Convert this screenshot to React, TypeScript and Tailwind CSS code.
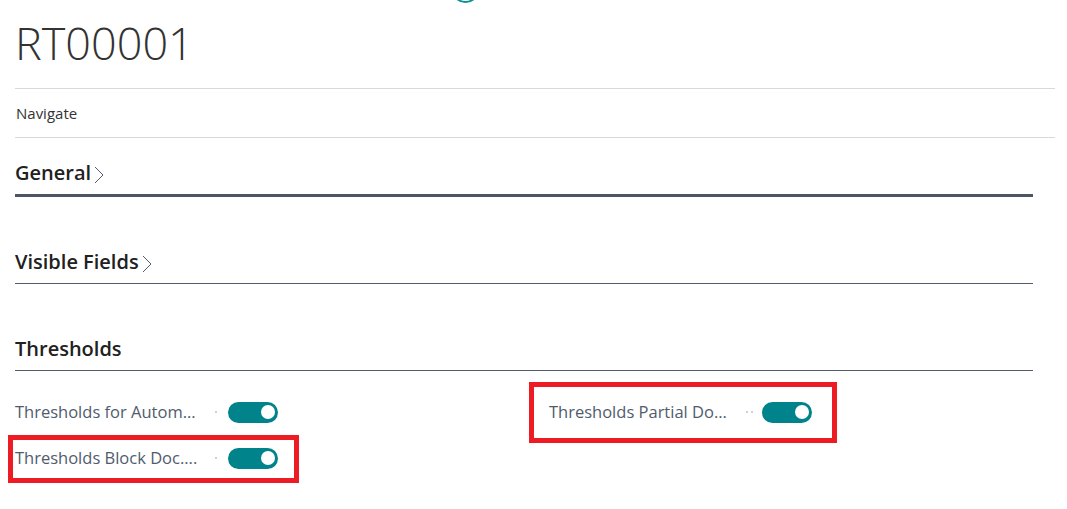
import React from "react";

const Toggle = () => (
  <div className="flex h-[21px] w-[50px] items-center justify-end rounded-full bg-[#00838a] pr-[3px]">
    <div className="h-[14px] w-[14px] rounded-full bg-white" />
  </div>
);

const Field = ({ label, dots = 1 }: { label: string; dots?: number }) => (
  <div className="flex h-[24px] items-center">
    <div className="w-[188px] whitespace-nowrap text-[16.5px] text-[#505c6d]">{label}</div>
    <div className="flex w-[25px] items-center justify-center gap-[3px]">
      {Array.from({ length: dots }).map((_, i) => (
        <span key={i} className="h-[2px] w-[2px] bg-[#d0d0d0]" />
      ))}
    </div>
    <Toggle />
  </div>
);

const Section = ({
  title,
  chevron,
  thick,
}: {
  title: string;
  chevron?: boolean;
  thick?: boolean;
}) => (
  <div
    className={
      "flex h-[48px] w-[1018px] items-end pb-[6px] " +
      (thick ? "border-b-[3px] border-[#4b5563]" : "border-b border-[#505c6d]")
    }
  >
    <span className="text-[20px] font-semibold text-[#212121]">{title}</span>
    {chevron && (
      <svg width="12" height="22" viewBox="0 0 12 22" className="mb-[2px] ml-[2px]">
        <path d="M2 3 L10 11 L2 19" fill="none" stroke="#505c6d" strokeWidth="1" />
      </svg>
    )}
  </div>
);

export default function App() {
  return (
    <div className="relative min-h-[509px] overflow-hidden bg-white px-[15px] font-['Open_Sans',sans-serif]">
      {/* teal circle peeking from the top */}
      <div className="absolute left-[451px] top-[-26px] h-[29px] w-[29px] rounded-full border-2 border-[#0f8f94]" />

      <h1 className="pt-[11px] pb-[14px] text-[45px] leading-[63px] font-light text-[#333333]">
        RT00001
      </h1>

      <div className="mr-[-3px] flex h-[50px] items-center border-y border-[#d9d9d9] pl-[1px] text-[15px] text-[#333333]">
        Navigate
      </div>

      <div className="pt-[11px]">
        <Section title="General" chevron thick />
      </div>
      <div className="pt-[39px]">
        <Section title="Visible Fields" chevron />
      </div>
      <div className="pt-[39px]">
        <Section title="Thresholds" />
      </div>

      <div className="mt-[29px] grid w-[1018px] grid-cols-[534px_1fr] gap-y-[22px]">
        <Field label="Thresholds for Autom..." />
        <div className="relative">
          <div className="pointer-events-none absolute left-[-20px] top-[-18px] h-[61px] w-[308px] border-[5px] border-[#ed1c24]" />
          <Field label="Thresholds Partial Do..." dots={2} />
        </div>
        <div className="relative">
          <div className="pointer-events-none absolute left-[-7px] top-[-11px] h-[48px] w-[291px] border-[5px] border-[#ed1c24]" />
          <Field label="Thresholds Block Doc...." />
        </div>
      </div>
    </div>
  );
}
